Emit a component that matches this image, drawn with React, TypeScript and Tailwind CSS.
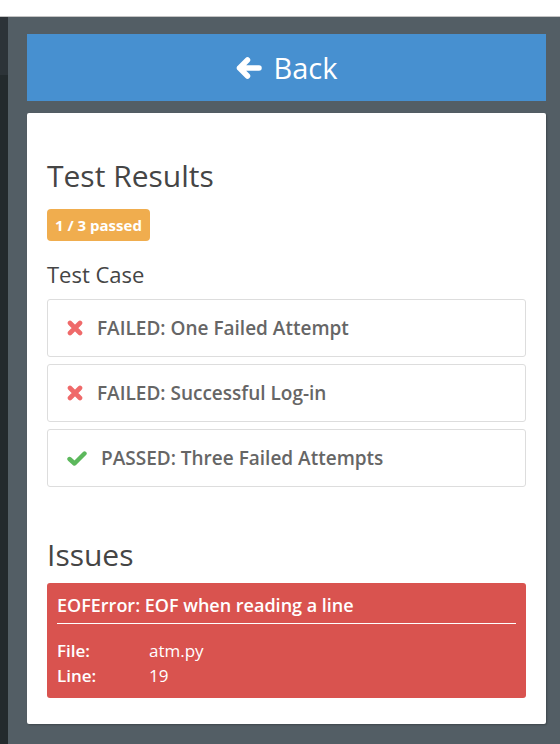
type TestCase = {
  name: string
  passed: boolean
}

const testCases: TestCase[] = [
  { name: "One Failed Attempt", passed: false },
  { name: "Successful Log-in", passed: false },
  { name: "Three Failed Attempts", passed: true },
]

function CrossIcon() {
  return (
    <svg viewBox="0 0 16 16" className="h-[16px] w-[16px] text-[#ef6a6a]">
      <path d="M3 3L13 13M13 3L3 13" stroke="currentColor" strokeWidth="4.6" strokeLinecap="round" fill="none" />
    </svg>
  )
}

function CheckIcon() {
  return (
    <svg viewBox="0 0 20 15" className="h-[15px] w-[20px] text-[#5cb85c]">
      <path d="M2.5 8L7.5 12.5L17.5 2.5" stroke="currentColor" strokeWidth="4.4" strokeLinecap="round" strokeLinejoin="round" fill="none" />
    </svg>
  )
}

function ArrowLeftIcon() {
  return (
    <svg viewBox="0 0 26 22" className="h-[22px] w-[26px]">
      <path d="M11.5 3L3.5 11L11.5 19M3.5 11H23" stroke="currentColor" strokeWidth="5.5" strokeLinecap="round" strokeLinejoin="round" fill="none" />
    </svg>
  )
}

function TestCaseRow({ test }: { test: TestCase }) {
  return (
    <div className="flex h-[58px] items-center rounded-[3px] border border-[#dddddd] pl-[19px]">
      {test.passed ? <CheckIcon /> : <CrossIcon />}
      <span className="ml-[14px] text-[19px] font-semibold text-[#666666]">
        {test.passed ? "PASSED" : "FAILED"}: {test.name}
      </span>
    </div>
  )
}

export default function App() {
  const passed = testCases.filter((t) => t.passed).length

  return (
    <div
      className="flex h-[744px] w-[560px] flex-col overflow-hidden bg-white"
      style={{ fontFamily: '"Open Sans", "Liberation Sans", sans-serif' }}
    >
      <div className="h-[17px] shrink-0 border-b border-[#c4c4c4] bg-white" />

      <div className="flex flex-1">
        {/* editor strip on the left */}
        <div className="flex w-[8px] flex-col">
          <div className="h-[58px] bg-[#2c3338]" />
          <div className="flex-1 bg-[#232a2d]" />
        </div>

        <div className="flex-1 bg-[#535e65] pt-[17px] pl-[19px] pr-[14px]">
          <button className="flex h-[67px] w-full items-center justify-center gap-[12px] bg-[#4790d0] text-white">
            <ArrowLeftIcon />
            <span className="text-[29px] leading-none">Back</span>
          </button>

          <div className="mt-[12px] rounded-[2px] bg-white px-[20px] pt-[46px] pb-[26px] shadow-[1px_1px_2px_rgba(0,0,0,0.25)]">
            <h3 className="text-[30px] leading-[1.1] text-[#454545]">Test Results</h3>

            <span className="mt-[17px] inline-flex h-[32px] items-center rounded-[4px] bg-[#f0ad4e] px-[8px] text-[15px] font-bold text-white">
              {passed} / {testCases.length} passed
            </span>

            <h4 className="mt-[21px] text-[22px] leading-[1.1] text-[#454545]">Test Case</h4>

            <div className="mt-[13px] flex flex-col gap-[7px]">
              {testCases.map((t) => (
                <TestCaseRow key={t.name} test={t} />
              ))}
            </div>

            <h3 className="mt-[51px] text-[30px] leading-[1.1] text-[#454545]">Issues</h3>

            <div className="mt-[12px] rounded-[3px] bg-[#d9534f] px-[10px] pt-[9px] pb-[10px] text-white">
              <div className="text-[18px] font-semibold leading-[27px]">
                EOFError: EOF when reading a line
              </div>
              <div className="mt-[4px] h-px bg-white" />
              <div className="mt-[14px] grid grid-cols-[92px_1fr] text-[17px] leading-[25px]">
                <span className="font-semibold">File:</span>
                <span>atm.py</span>
                <span className="font-semibold">Line:</span>
                <span>19</span>
              </div>
            </div>
          </div>
        </div>
      </div>
    </div>
  )
}
